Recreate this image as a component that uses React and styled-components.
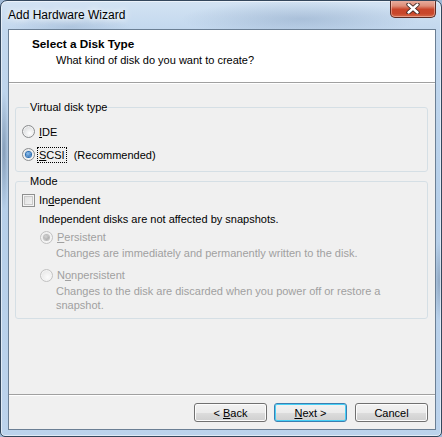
import React from "react";
import styled, { createGlobalStyle, css } from "styled-components";

const Global = createGlobalStyle`
  html, body { margin: 0; padding: 0; background: #9fb9d6; }
  body { font-family: "Liberation Sans", Arial, sans-serif; font-size: 11px; }
`;

const Window = styled.div`
  width: 442px;
  height: 437px;
  box-sizing: border-box;
  border: 1px solid #34475c;
  border-radius: 7px 7px 5px 5px;
  display: flex;
  flex-direction: column;
  overflow: hidden;
  background:
    radial-gradient(ellipse 5px 60px at 3px 150px, rgba(70,95,125,0.45), rgba(70,95,125,0) 100%),
    radial-gradient(ellipse 5px 40px at 438px 280px, rgba(70,95,125,0.35), rgba(70,95,125,0) 100%),
    linear-gradient(180deg, #d3e3f3 0px, #c3d8ee 28px, #b6cfe9 200px, #bcd3ec 437px);
  box-shadow: inset 0 0 0 1px rgba(255,255,255,0.55);
`;

const TitleBar = styled.div`
  height: 28px;
  flex: none;
  display: flex;
  align-items: flex-start;
  justify-content: space-between;
  padding-left: 7px;
  padding-right: 5px;
  background:
    radial-gradient(ellipse 120px 18px at 300px 18px, rgba(90,120,160,0.28), rgba(90,120,160,0) 100%),
    radial-gradient(ellipse 60px 12px at 70px 26px, rgba(90,120,160,0.2), rgba(90,120,160,0) 100%);
`;

const Title = styled.div`
  margin-top: 7px;
  font-size: 12px;
  line-height: 15px;
  color: #000;
  text-shadow: 0 0 6px #fff, 0 0 10px #fff;
`;

const CloseButton = styled.div`
  width: 46px;
  height: 18px;
  margin-top: -1px;
  box-sizing: border-box;
  border: 1px solid #5b2a22;
  border-top: none;
  border-radius: 0 0 5px 5px;
  background: linear-gradient(180deg, #eab2a4 0%, #de8d78 35%, #c9452a 55%, #c8472b 80%, #d56a4a 100%);
  box-shadow: inset 0 0 0 1px rgba(255, 220, 210, 0.45);
  display: flex;
  align-items: center;
  justify-content: center;
`;

const Client = styled.div`
  flex: 1;
  margin: 0 5px 6px 7px;
  border: 1px solid #6b7f94;
  background: #f0f0f0;
  display: flex;
  flex-direction: column;
`;

const Header = styled.div`
  height: 53px;
  box-sizing: border-box;
  background: #fff;
  padding: 7px 0 0 23px;
  border-bottom: 1px solid #a0a0a0;
`;

const HeaderTitle = styled.div`
  font-weight: bold;
  font-size: 11.75px;
  line-height: 14px;
  color: #000;
`;

const HeaderSub = styled.div`
  margin: 2px 0 0 24px;
  line-height: 14px;
  color: #000;
`;

const Etch = styled.div`
  height: 1px;
  background: #fff;
  flex: none;
`;

const Body = styled.div`
  flex: 1;
  padding: 16px 7px 0 6px;
  display: flex;
  flex-direction: column;
  gap: 2px;
`;

const Group = styled.fieldset`
  margin: 0;
  padding: ${(p) => p.$pad};
  border: 1px solid #d5dfe5;
  border-radius: 3px;
  min-width: 0;
`;

const Legend = styled.legend`
  margin-left: 7px;
  padding: 0 1px;
  line-height: 14px;
  color: #000;
`;

const Row = styled.div`
  display: flex;
  align-items: center;
  height: ${(p) => p.$h || 23}px;
  margin-left: ${(p) => p.$indent || 0}px;
  margin-top: ${(p) => p.$mt || 0}px;
  color: ${(p) => (p.$disabled ? "#a0a0a0" : "#000")};
`;

const Text = styled.div`
  line-height: 14px;
  margin-left: ${(p) => p.$indent || 0}px;
  color: ${(p) => (p.$disabled ? "#a0a0a0" : "#000")};
`;

const Label = styled.span`
  margin-left: ${(p) => p.$gap ?? 4}px;
  line-height: 14px;
  ${(p) =>
    p.$focus &&
    css`
      outline: 1px dotted #000;
      outline-offset: 0px;
      padding: 0 1px;
      margin-left: 3px;
    `}
`;

const Key = styled.span`
  text-decoration: underline;
  text-underline-offset: 1px;
`;

const Extra = styled.span`
  margin-left: 8px;
`;

const RadioCircle = styled.span`
  width: 13px;
  height: 13px;
  box-sizing: border-box;
  border-radius: 50%;
  flex: none;
  display: flex;
  align-items: center;
  justify-content: center;
  border: 1px solid ${(p) => (p.$disabled ? "#c2c2c2" : "#8a8c8e")};
  background: ${(p) =>
    p.$disabled
      ? "radial-gradient(circle at 60% 65%, #fbfbfb, #e6e6e6 80%)"
      : "radial-gradient(circle at 60% 65%, #ffffff, #d4d6d8 85%)"};
  box-shadow: inset 0 0 0 1px ${(p) => (p.$disabled ? "#f4f4f4" : "#f3f3f3")};
`;

const RadioDot = styled.span`
  width: 5px;
  height: 5px;
  border-radius: 50%;
  background: ${(p) =>
    p.$disabled
      ? "radial-gradient(circle at 40% 35%, #d4d4d4, #9a9a9a)"
      : "radial-gradient(circle at 40% 35%, #8fc3f2, #1c5aa0)"};
  box-shadow: 0 0 0 1px ${(p) => (p.$disabled ? "#bdbdbd" : "#2a6fb5")};
`;

const Check = styled.span`
  width: 13px;
  height: 13px;
  box-sizing: border-box;
  flex: none;
  border: 1px solid #8e8f8f;
  background: linear-gradient(135deg, #dcdcdc, #f6f6f6);
  box-shadow: inset 0 0 0 1px #f4f4f4, inset 0 0 0 2px #c9c9c9;
`;

const Spacer = styled.div`
  flex: 1;
`;

const Rule = styled.div`
  height: 1px;
  background: #a0a0a0;
  flex: none;
`;

const ButtonRow = styled.div`
  display: flex;
  justify-content: flex-end;
  padding: 7px 7px 7px 0;
`;

const Button = styled.div`
  width: 73px;
  height: 19px;
  box-sizing: border-box;
  margin-left: ${(p) => p.$gap}px;
  border: 1px solid ${(p) => (p.$default ? "#3c7fb1" : "#707070")};
  border-radius: 3px;
  background: linear-gradient(180deg, #f2f2f2 0%, #ebebeb 50%, #dddddd 51%, #cfcfcf 100%);
  box-shadow: inset 0 0 0 1px ${(p) => (p.$default ? "#48d0f6" : "#fcfcfc")};
  display: flex;
  align-items: center;
  justify-content: center;
  line-height: 14px;
  color: #000;
`;

function Radio({ checked, disabled }) {
  return (
    <RadioCircle $disabled={disabled}>
      {checked && <RadioDot $disabled={disabled} />}
    </RadioCircle>
  );
}

function CloseGlyph() {
  return (
    <svg width="14" height="11" viewBox="0 0 14 11">
      <path
        d="M2.5 1.5 L11.5 9.5 M11.5 1.5 L2.5 9.5"
        stroke="#3b2320"
        strokeWidth="4.2"
        strokeLinecap="round"
        fill="none"
      />
      <path
        d="M2.5 1.5 L11.5 9.5 M11.5 1.5 L2.5 9.5"
        stroke="#ffffff"
        strokeWidth="2.4"
        strokeLinecap="round"
        fill="none"
      />
    </svg>
  );
}

export default function App() {
  return (
    <>
      <Global />
      <Window>
        <TitleBar>
          <Title>Add Hardware Wizard</Title>
          <CloseButton>
            <CloseGlyph />
          </CloseButton>
        </TitleBar>
        <Client>
          <Header>
            <HeaderTitle>Select a Disk Type</HeaderTitle>
            <HeaderSub>What kind of disk do you want to create?</HeaderSub>
          </Header>
          <Etch />
          <Body>
            <Group $pad="6px 0 5px 6px">
              <Legend>Virtual disk type</Legend>
              <Row>
                <Radio />
                <Label>
                  <Key>I</Key>DE
                </Label>
              </Row>
              <Row>
                <Radio checked />
                <Label $focus>
                  <Key>S</Key>CSI
                </Label>
                <Extra>(Recommended)</Extra>
              </Row>
            </Group>
            <Group $pad="0 0 6px 6px">
              <Legend>Mode</Legend>
              <Row $h={24}>
                <Check />
                <Label>
                  In<Key>d</Key>ependent
                </Label>
              </Row>
              <Text $indent={17}>Independent disks are not affected by snapshots.</Text>
              <Row $h={18} $mt={2} $indent={18} $disabled>
                <Radio checked disabled />
                <Label>
                  <Key>P</Key>ersistent
                </Label>
              </Row>
              <Text $indent={34} $disabled>
                Changes are immediately and permanently written to the disk.
              </Text>
              <Row $h={18} $mt={6} $indent={18} $disabled>
                <Radio disabled />
                <Label>
                  N<Key>o</Key>npersistent
                </Label>
              </Row>
              <Text $indent={34} $disabled>
                Changes to the disk are discarded when you power off or restore a
                <br />
                snapshot.
              </Text>
            </Group>
          </Body>
          <Spacer />
          <Rule />
          <Etch />
          <ButtonRow>
            <Button $gap={0}>
              &lt;&nbsp;<Key>B</Key>ack
            </Button>
            <Button $gap={7} $default>
              <Key>N</Key>ext &gt;
            </Button>
            <Button $gap={8}>Cancel</Button>
          </ButtonRow>
        </Client>
      </Window>
    </>
  );
}
